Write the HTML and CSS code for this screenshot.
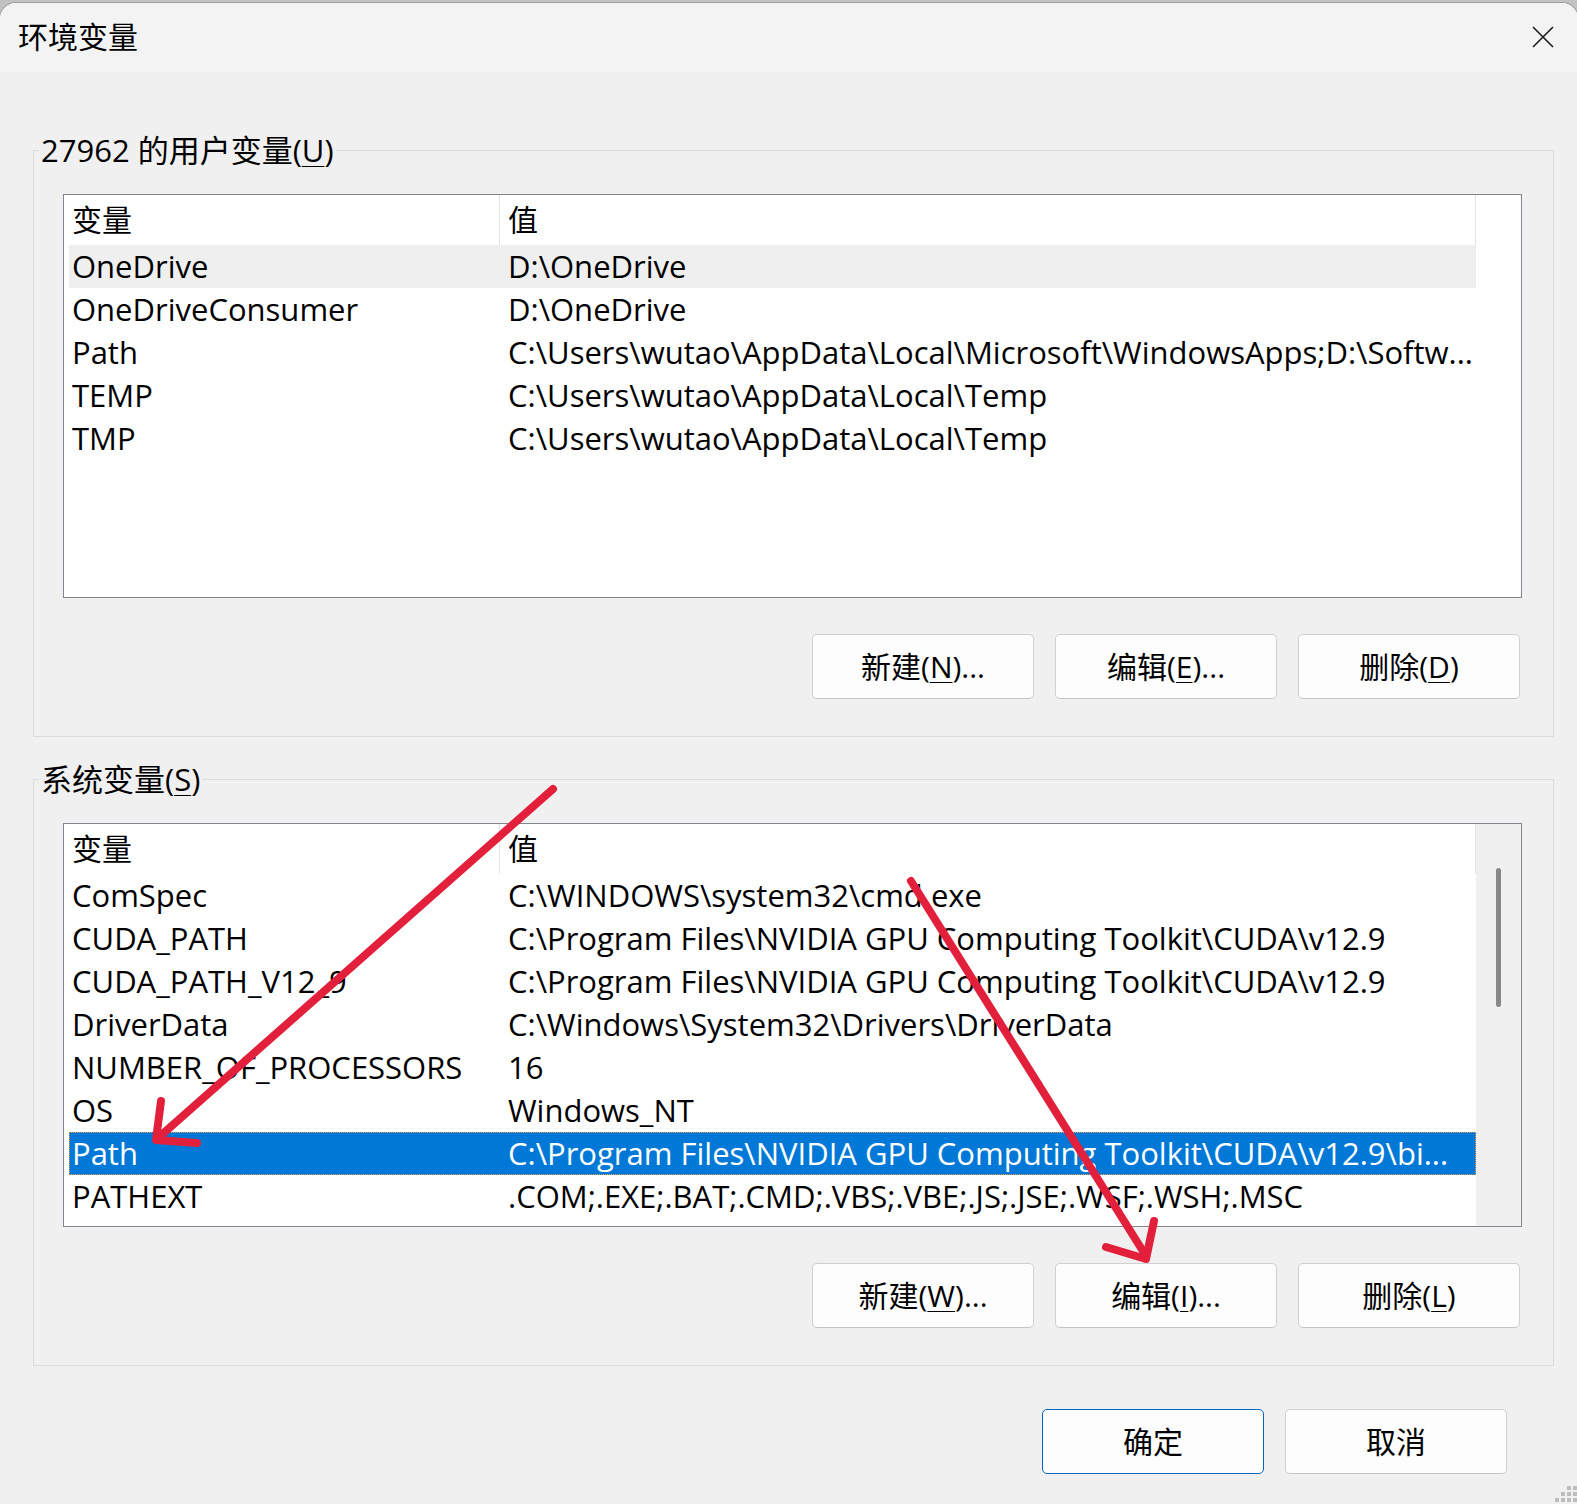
FILE: index.html
```html
<!DOCTYPE html>
<html lang="zh-CN">
<head>
<meta charset="utf-8">
<title>环境变量</title>
<link rel="stylesheet" href="styles.css">
</head>
<body>
<div class="window">
  <div class="titlebar">
    <span class="title">环境变量</span>
    <svg class="close" width="22" height="22" viewBox="0 0 22 22"><path d="M1 1 L21 21 M21 1 L1 21" stroke="#1b1b1b" stroke-width="1.6" fill="none"/></svg>
  </div>
  <div class="content">
    <fieldset class="group">
      <legend>27962 的用户变量(<u>U</u>)</legend>
      <div class="group-body">
        <div class="listview">
          <div class="lv-main">
            <div class="lv-head"><div class="c1">变量</div><div class="c2">值</div></div>
            <div class="row hot"><div class="c1">OneDrive</div><div class="c2">D:\OneDrive</div></div>
            <div class="row"><div class="c1">OneDriveConsumer</div><div class="c2">D:\OneDrive</div></div>
            <div class="row"><div class="c1">Path</div><div class="c2">C:\Users\wutao\AppData\Local\Microsoft\WindowsApps;D:\Softw...</div></div>
            <div class="row"><div class="c1">TEMP</div><div class="c2">C:\Users\wutao\AppData\Local\Temp</div></div>
            <div class="row"><div class="c1">TMP</div><div class="c2">C:\Users\wutao\AppData\Local\Temp</div></div>
          </div>
        </div>
        <div class="btnrow">
          <button class="btn">新建(<u>N</u>)...</button>
          <button class="btn">编辑(<u>E</u>)...</button>
          <button class="btn">删除(<u>D</u>)</button>
        </div>
      </div>
    </fieldset>

    <fieldset class="group second">
      <legend>系统变量(<u>S</u>)</legend>
      <div class="group-body">
        <div class="listview">
          <div class="lv-main">
            <div class="lv-head"><div class="c1">变量</div><div class="c2">值</div></div>
            <div class="row"><div class="c1">ComSpec</div><div class="c2">C:\WINDOWS\system32\cmd.exe</div></div>
            <div class="row"><div class="c1">CUDA_PATH</div><div class="c2">C:\Program Files\NVIDIA GPU Computing Toolkit\CUDA\v12.9</div></div>
            <div class="row"><div class="c1">CUDA_PATH_V12_9</div><div class="c2">C:\Program Files\NVIDIA GPU Computing Toolkit\CUDA\v12.9</div></div>
            <div class="row"><div class="c1">DriverData</div><div class="c2">C:\Windows\System32\Drivers\DriverData</div></div>
            <div class="row"><div class="c1">NUMBER_OF_PROCESSORS</div><div class="c2">16</div></div>
            <div class="row"><div class="c1">OS</div><div class="c2">Windows_NT</div></div>
            <div class="row selected"><div class="c1">Path</div><div class="c2">C:\Program Files\NVIDIA GPU Computing Toolkit\CUDA\v12.9\bi...</div></div>
            <div class="row"><div class="c1">PATHEXT</div><div class="c2">.COM;.EXE;.BAT;.CMD;.VBS;.VBE;.JS;.JSE;.WSF;.WSH;.MSC</div></div>
          </div>
          <div class="vscroll"><div class="thumb"></div></div>
        </div>
        <div class="btnrow">
          <button class="btn">新建(<u>W</u>)...</button>
          <button class="btn">编辑(<u>I</u>)...</button>
          <button class="btn">删除(<u>L</u>)</button>
        </div>
      </div>
    </fieldset>

    <div class="dlg-buttons">
      <button class="btn primary">确定</button>
      <button class="btn">取消</button>
    </div>
  </div>
</div>

<svg class="annot" width="1577" height="1504" viewBox="0 0 1577 1504">
  <g fill="none" stroke="#e2203c" stroke-width="8" stroke-linecap="round" stroke-linejoin="round">
    <path d="M553 789 L158 1138"/>
    <path d="M161 1101 L156 1140 L197 1143"/>
    <path d="M911 881 L1146 1256"/>
    <path d="M1154 1221 L1146 1259 L1106 1247"/>
  </g>
</svg>

<svg class="grip" width="24" height="22" viewBox="0 0 24 22">
  <g fill="#bdbdbd">
    <rect x="14" y="4" width="4" height="4"/>
    <rect x="20" y="4" width="4" height="4"/>
    <rect x="8" y="10" width="4" height="4"/>
    <rect x="14" y="10" width="4" height="4"/>
    <rect x="20" y="10" width="4" height="4"/>
    <rect x="2" y="16" width="4" height="4"/>
    <rect x="8" y="16" width="4" height="4"/>
    <rect x="14" y="16" width="4" height="4"/>
    <rect x="20" y="16" width="4" height="4"/>
  </g>
</svg>
</body>
</html>
```

FILE: styles.css
```css
html, body {
  margin: 0;
  padding: 0;
}

body {
  width: 1577px;
  height: 1504px;
  overflow: hidden;
  position: relative;
  background: #c2c2c2;
  font-family: "Open Sans", "Noto Sans CJK SC", sans-serif;
  font-size: 30px;
  color: #000;
}

.window {
  margin-top: 2px;
  margin-left: -1px;
  width: 1580px;
  height: 1502px;
  box-sizing: border-box;
  border: 1px solid #9e9e9e;
  border-bottom: none;
  border-radius: 17px 17px 0 0;
  background: #f0f0f0;
  overflow: hidden;
}

.titlebar {
  height: 69px;
  background: #f3f3f3;
  display: flex;
  align-items: center;
  padding-left: 18px;
  padding-right: 24px;
}

.title {
  font-family: "Noto Sans CJK SC", sans-serif;
  font-size: 30px;
  line-height: 40px;
  margin-top: -6px;
}

.close {
  margin-left: auto;
  margin-top: -2px;
}

.content {
  padding: 58px 24px 0 33px;
}

.group {
  margin: 0;
  padding: 0;
  border: 1px solid #dcdcdc;
  min-width: 0;
}

.group.second {
  margin-top: 22px;
}

.group legend {
  margin-left: 5px;
  padding: 0 2px;
  font-size: 31px;
  line-height: 40px;
  height: 40px;
}

.group-body {
  padding: 24px 31px 37px 29px;
}

u {
  text-decoration-thickness: 1px;
  text-underline-offset: 4px;
}

.listview {
  height: 404px;
  box-sizing: border-box;
  border: 1px solid #828790;
  background: #fff;
  display: flex;
}

.lv-main {
  width: 1412px;
  padding-left: 5px;
  box-sizing: border-box;
  flex: none;
}

.lv-head {
  display: flex;
  height: 50px;
  line-height: 50px;
  font-size: 30px;
}

.lv-head .c1,
.lv-head .c2 {
  border-right: 1px solid #e5e5e5;
}

.c1 {
  width: 431px;
  flex: none;
  box-sizing: border-box;
  padding-left: 3px;
  white-space: nowrap;
  overflow: hidden;
}

.c2 {
  width: 976px;
  flex: none;
  box-sizing: border-box;
  padding-left: 8px;
  padding-right: 4px;
  white-space: nowrap;
  overflow: hidden;
}

.row {
  display: flex;
  height: 43px;
  line-height: 43px;
  font-size: 31px;
}

.row.hot {
  background: #efefef;
}

.row.selected {
  background: #0078d7;
  color: #fff;
  outline: 1px dotted #e8a050;
  outline-offset: -1px;
}

.vscroll {
  flex: 1;
  background: #f0f0f0;
  padding: 44px 0 0 20px;
  box-sizing: border-box;
}

.thumb {
  width: 5px;
  height: 139px;
  border-radius: 3px;
  background: #878787;
}

.btnrow {
  display: flex;
  justify-content: flex-end;
  gap: 21px;
  margin-top: 36px;
  padding-right: 2px;
}

.btn {
  width: 222px;
  height: 65px;
  box-sizing: border-box;
  border: 1px solid #d0d0d0;
  border-bottom-color: #c4c4c4;
  border-radius: 5px;
  background: #fdfdfd;
  font: inherit;
  font-size: 30px;
  color: #000;
  padding: 0;
  line-height: 40px;
}

.btn.primary {
  border: 1px solid #0067c0;
}

.dlg-buttons {
  display: flex;
  justify-content: flex-end;
  gap: 21px;
  margin-top: 43px;
  padding-right: 47px;
}

.annot {
  position: absolute;
  left: 0;
  top: 0;
  pointer-events: none;
}

.grip {
  position: absolute;
  right: 0;
  bottom: 0;
}
```
